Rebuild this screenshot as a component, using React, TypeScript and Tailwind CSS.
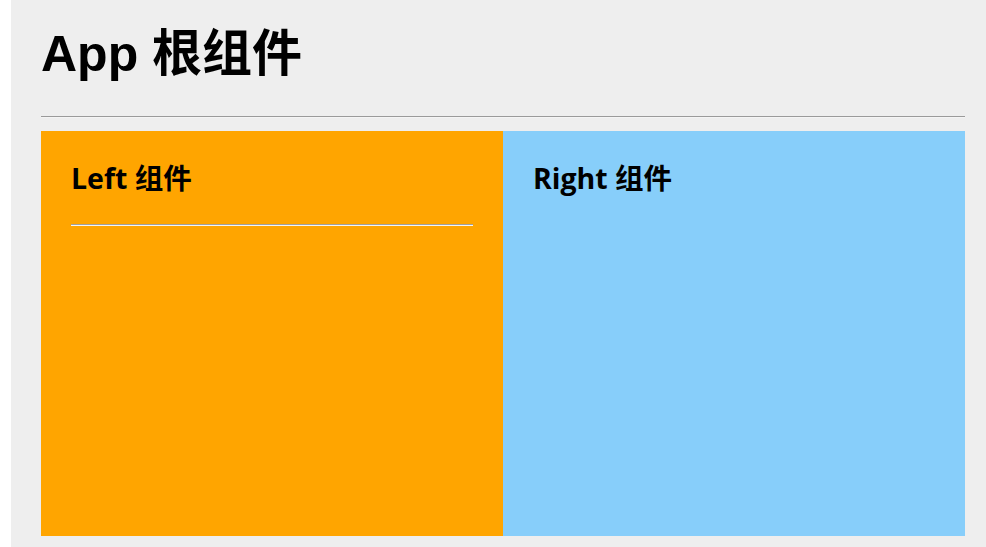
const cjk = '"Noto Sans CJK SC", sans-serif'

function Left() {
  return (
    <div className="flex-1 bg-[#ffa500] px-[30px] pt-[33px]">
      <h2 className="text-[28.5px] leading-[28px] font-bold text-black" style={{ fontFamily: `"Open Sans", ${cjk}` }}>
        Left 组件
      </h2>
      <div className="mt-[32px] h-0 border-t border-b border-t-[#a0a0a0] border-b-[#f4f4f4]" />
    </div>
  )
}

function Right() {
  return (
    <div className="flex-1 bg-[#87cefa] px-[30px] pt-[33px]">
      <h2 className="text-[28.5px] leading-[28px] font-bold text-black" style={{ fontFamily: `"Open Sans", ${cjk}` }}>
        Right 组件
      </h2>
    </div>
  )
}

export default function App() {
  return (
    <div className="ml-[11px] min-h-[547px] bg-[#eeeeee] pt-[29px] pr-[21px] pl-[30px]">
      <h1 className="text-[50px] leading-[50px] font-bold text-black" style={{ fontFamily: `"Liberation Sans", ${cjk}` }}>
        App 根组件
      </h1>
      <div className="mt-[37px] h-0 border-t border-b border-t-[#9a9a9a] border-b-[#f4f4f4]" />
      <div className="mt-[13px] flex h-[405px]">
        <Left />
        <Right />
      </div>
    </div>
  )
}
